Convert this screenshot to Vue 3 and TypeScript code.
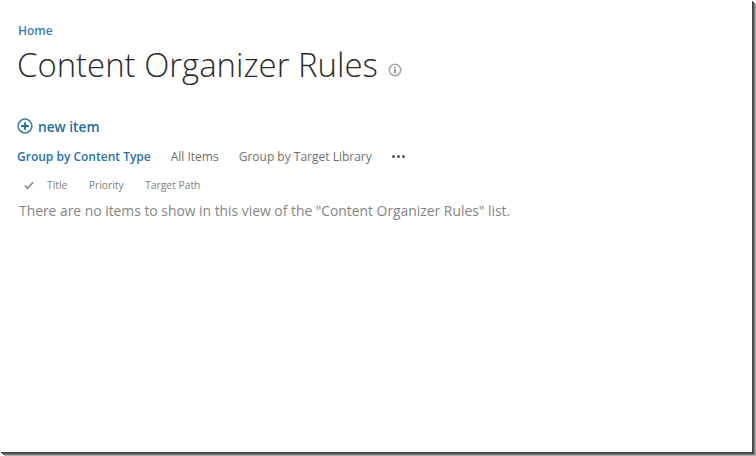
<script setup lang="ts">
const views = ['All Items', 'Group by Target Library']
const columns = ['Title', 'Priority', 'Target Path']
</script>

<template>
  <div class="shell">
    <div class="page">
      <a class="crumb">Home</a>
      <div class="title-row">
        <h1 class="title">Content Organizer Rules</h1>
        <svg class="info" width="14" height="14" viewBox="0 0 14 14">
          <circle cx="7" cy="7" r="5.7" fill="none" stroke="#a3a3a3" stroke-width="1.6" />
          <rect x="6.2" y="6" width="1.7" height="4.4" fill="#8a8a8a" />
          <rect x="6.2" y="3.5" width="1.7" height="1.6" fill="#8a8a8a" />
        </svg>
      </div>
      <div class="new-item">
        <svg width="16" height="16" viewBox="0 0 16 16">
          <circle cx="8" cy="8" r="6.9" fill="none" stroke="#3f7fa6" stroke-width="1.5" />
          <path d="M8 4.2v7.6M4.2 8h7.6" stroke="#1f6c9e" stroke-width="1.8" fill="none" />
        </svg>
        <span>new item</span>
      </div>
      <div class="views">
        <span class="view active">Group by Content Type</span>
        <span v-for="v in views" :key="v" class="view">{{ v }}</span>
        <span class="dots"><i></i><i></i><i></i></span>
      </div>
      <div class="columns">
        <svg class="check" width="10" height="9" viewBox="0 0 11 10">
          <path d="M1 5.2l3 3L10 1.4" fill="none" stroke="#8a8a8a" stroke-width="1.8" />
        </svg>
        <span v-for="c in columns" :key="c" class="col">{{ c }}</span>
      </div>
      <p class="empty">There are no items to show in this view of the "Content Organizer Rules" list.</p>
    </div>
  </div>
</template>

<style>
html, body { margin: 0; background: #fff; }
html { overflow: hidden; }
</style>

<style scoped>
.shell {
  width: 756px;
  height: 456px;
  background: #fff;
}
.page {
  box-sizing: border-box;
  width: 752px;
  height: 452px;
  padding: 22px 0 0 17px;
  background: #fff;
  font-family: "Open Sans", "Liberation Sans", sans-serif;
  box-shadow: 1px 1px 0 #444, 2px 2px 0 #555, 3px 3px 0 #777, 4px 4px 0 #b0b0b0;
}
.crumb {
  display: block;
  height: 18px;
  font-size: 12px;
  line-height: 18px;
  font-weight: 600;
  color: #3f7cb0;
  margin-left: 1px;
}
.title-row {
  display: flex;
  align-items: center;
  height: 50px;
}
.title {
  margin: 0;
  font-size: 32.9px;
  line-height: 50px;
  font-weight: 300;
  color: #2b2b2b;
}
.info { margin: 9px 0 0 10px; }
.new-item {
  display: flex;
  align-items: center;
  gap: 5px;
  height: 24px;
  margin-top: 24px;
  font-size: 13.7px;
  font-weight: 600;
  color: #1f6c9e;
}
.views {
  display: flex;
  align-items: center;
  height: 20px;
  margin-top: 8px;
  font-size: 12px;
  color: #6f6f6f;
}
.view { margin-right: 20px; }
.view.active { color: #2a72a8; font-weight: 600; }
.dots { display: flex; gap: 2px; }
.dots i { width: 3px; height: 3px; border-radius: 50%; background: #555; }
.columns {
  display: flex;
  align-items: center;
  height: 18px;
  margin-top: 10px;
  padding-left: 7px;
  font-size: 10.3px;
  color: #808080;
}
.check { margin-right: 13px; }
.col { margin-right: 21.5px; }
.empty {
  margin: 7px 0 0 2px;
  font-size: 13.86px;
  line-height: 20px;
  color: #858585;
}
</style>
